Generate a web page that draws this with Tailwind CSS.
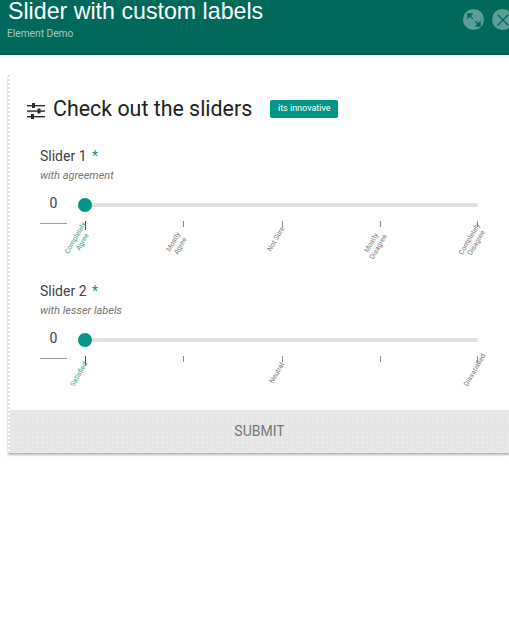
<!DOCTYPE html>
<html lang="en">
<head>
  <meta charset="UTF-8" />
  <title>Slider with custom labels</title>
  <script src="https://cdn.jsdelivr.net/npm/@tailwindcss/browser@4"></script>
</head>
<body class="w-[509px] h-[636px] overflow-hidden bg-white font-['Roboto',sans-serif] text-[#424242]">
  <!-- toolbar -->
  <header class="h-[55px] bg-[#00695c] border-b-2 border-[#005d51] flex justify-between overflow-hidden">
    <div class="pl-[8px] -mt-[3px]">
      <h1 class="text-[23.2px] leading-[28px] text-white font-['Liberation_Sans',sans-serif]">Slider with custom labels</h1>
      <p class="-ml-[1px] text-[10.2px] leading-[12px] mt-[3px] text-[#a3cbc5]">Element Demo</p>
    </div>
    <div class="flex gap-[8px] pt-[9px] -mr-[4px] shrink-0">
      <span class="w-[21px] h-[21px] rounded-full bg-[#5b9e94] flex items-center justify-center">
        <svg viewBox="0 0 24 24" class="w-[18px] h-[18px] text-[#00695c]" fill="currentColor" stroke="currentColor" stroke-width="1.8"><path d="M4 4h5L4 9z"/><path d="M6 6l4.500 4.500"/><path d="M20 20h-5l5-5z"/><path d="M18 18l-4.500-4.500"/></svg>
      </span>
      <span class="w-[21px] h-[21px] rounded-full bg-[#5b9e94] flex items-center justify-center">
        <svg viewBox="0 0 24 24" class="w-[18px] h-[18px] text-[#00695c]" fill="none" stroke="currentColor" stroke-width="1.800"><path d="M5 5l14 14M19 5L5 19"/></svg>
      </span>
    </div>
  </header>

  <main class="pt-[20px] pl-[8px]">
    <section class="w-[501px] border-l-2 border-dotted border-[#e4e4e4] shadow-[0_2px_2px_rgba(0,0,0,0.3)]">
      <div class="flex items-center h-[71px] pl-[17px] pb-[3px]">
        <svg viewBox="0 0 18 16" class="w-[18px] h-[16px] mt-[3px] text-[#2b2b2b]" fill="currentColor">
          <rect x="0" y="2" width="18" height="1.4"/><rect x="5" y="0" width="3" height="5"/>
          <rect x="0" y="7.4" width="18" height="1.4"/><rect x="10.500" y="5.500" width="3" height="5"/>
          <rect x="0" y="13" width="18" height="1.4"/><rect x="4" y="11" width="3" height="5"/>
        </svg>
        <h2 class="ml-[8px] text-[21.4px] leading-[28px] text-[#212121]">Check out the sliders</h2>
        <span class="ml-[18px] w-[68px] h-[18px] rounded-[2px] bg-[#009688] text-white text-[9px] flex items-center justify-center">its innovative</span>
      </div>

      <div class="pl-[30px] flex flex-col gap-[17px] pb-[11px]">
        <div>
          <p class="text-[14px] leading-[20px]">Slider 1 <span class="text-[#009688] ml-[2px]">*</span></p>
          <p class="text-[11px] leading-[19px] italic text-[#757575]">with agreement</p>
          <div class="flex mt-[8px]">
            <div class="w-[27px] h-[31px] border-b border-[#9e9e9e] text-center text-[14px] leading-[20px]">0</div>
            <div class="ml-[18px] w-[393px] pt-[10px] relative">
              <div class="h-[4px] rounded-full bg-[#e0e0e0]"></div>
              <span class="absolute left-[-7px] top-[5px] w-[14px] h-[14px] rounded-full bg-[#009688]"></span>
              <div class="relative h-[43px] mt-[14px] text-[7px] leading-[8px] text-center text-[#757575]">
                <i class="absolute left-0 top-0 w-px h-[9px] bg-[#00695c]"></i>
                <i class="absolute left-[98px] top-0 w-px h-[6px] bg-[#8a8a8a]"></i>
                <i class="absolute left-[197px] top-0 w-px h-[6px] bg-[#8a8a8a]"></i>
                <i class="absolute left-[295px] top-0 w-px h-[6px] bg-[#8a8a8a]"></i>
                <i class="absolute left-[392px] top-0 w-px h-[6px] bg-[#8a8a8a]"></i>
                <span class="absolute left-[-6px] top-[19px] -translate-x-1/2 -translate-y-1/2 -rotate-[60deg] text-[#3f9c8e]">Completely<br>Agree</span>
                <span class="absolute left-[92px] top-[23px] -translate-x-1/2 -translate-y-1/2 -rotate-[60deg]">Mostly<br>Agree</span>
                <span class="absolute left-[191px] top-[18px] -translate-x-1/2 -translate-y-1/2 -rotate-[60deg] whitespace-nowrap">Not Sure</span>
                <span class="absolute left-[290px] top-[24px] -translate-x-1/2 -translate-y-1/2 -rotate-[60deg]">Mostly<br>Disagree</span>
                <span class="absolute left-[388px] top-[20px] -translate-x-1/2 -translate-y-1/2 -rotate-[60deg]">Completely<br>Disagree</span>
              </div>
            </div>
          </div>
        </div>

        <div>
          <p class="text-[14px] leading-[20px]">Slider 2 <span class="text-[#009688] ml-[2px]">*</span></p>
          <p class="text-[11px] leading-[19px] italic text-[#757575]">with lesser labels</p>
          <div class="flex mt-[8px]">
            <div class="w-[27px] h-[31px] border-b border-[#9e9e9e] text-center text-[14px] leading-[20px]">0</div>
            <div class="ml-[18px] w-[393px] pt-[10px] relative">
              <div class="h-[4px] rounded-full bg-[#e0e0e0]"></div>
              <span class="absolute left-[-7px] top-[5px] w-[14px] h-[14px] rounded-full bg-[#009688]"></span>
              <div class="relative h-[43px] mt-[14px] text-[7px] leading-[8px] text-center text-[#757575]">
                <i class="absolute left-0 top-0 w-px h-[9px] bg-[#00695c]"></i>
                <i class="absolute left-[98px] top-0 w-px h-[6px] bg-[#8a8a8a]"></i>
                <i class="absolute left-[197px] top-0 w-px h-[6px] bg-[#8a8a8a]"></i>
                <i class="absolute left-[295px] top-0 w-px h-[6px] bg-[#8a8a8a]"></i>
                <i class="absolute left-[392px] top-0 w-px h-[6px] bg-[#8a8a8a]"></i>
                <span class="absolute left-[-6px] top-[18px] -translate-x-1/2 -translate-y-1/2 -rotate-[60deg] text-[#3f9c8e]">Satisfied</span>
                <span class="absolute left-[192px] top-[17px] -translate-x-1/2 -translate-y-1/2 -rotate-[60deg]">Neutral</span>
                <span class="absolute left-[390px] top-[14px] -translate-x-1/2 -translate-y-1/2 -rotate-[60deg]">Dissatisfied</span>
              </div>
            </div>
          </div>
        </div>
      </div>

      <button class="block w-full h-[43px] bg-[#e6e6e6] bg-[radial-gradient(circle,#f6f6f6_0.5px,transparent_0.8px)] bg-[length:5px_5px] text-[14px] text-[#757575] text-center">SUBMIT</button>
    </section>
  </main>
</body>
</html>
